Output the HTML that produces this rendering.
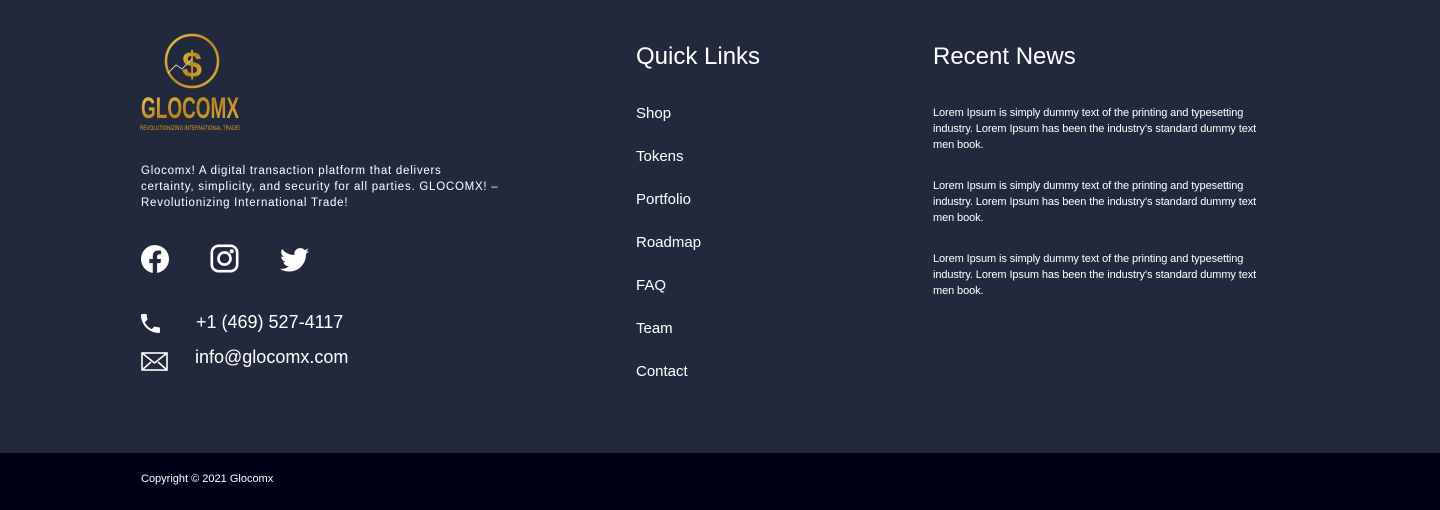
<!DOCTYPE html>
<html><head><style>
*{margin:0;padding:0;box-sizing:border-box}
body{width:1440px;height:510px;background:#23293c;font-family:"Liberation Sans",sans-serif;color:#fff;position:relative;overflow:hidden}
.a{position:absolute}
.ql{font-size:15px;color:#fff}
.news{font-size:11px;line-height:16px;width:370px;letter-spacing:-0.1px;white-space:nowrap}
</style></head><body>
<svg class="a" style="left:140px;top:33px" width="102" height="100" viewBox="0 0 102 100">
<defs><linearGradient id="g" x1="0" y1="0" x2="1" y2="1"><stop offset="0" stop-color="#f0c850"/><stop offset=".5" stop-color="#b8861e"/><stop offset="1" stop-color="#e0b040"/></linearGradient></defs>
<circle cx="52" cy="28" r="26" fill="none" stroke="url(#g)" stroke-width="2.5"/>
<text x="52" y="44" font-size="36" font-family="Liberation Sans" font-weight="bold" fill="url(#g)" text-anchor="middle">$</text>
<polyline points="28,40 36,32 42,36 52,26" fill="none" stroke="#ccc" stroke-width="1"/>
<text x="50" y="85" font-size="30" font-family="Liberation Sans" font-weight="bold" fill="url(#g)" text-anchor="middle" textLength="98" lengthAdjust="spacingAndGlyphs">GLOCOMX</text>
<text x="50" y="97" font-size="6" font-family="Liberation Sans" fill="#d4a030" text-anchor="middle" textLength="100" lengthAdjust="spacingAndGlyphs">REVOLUTIONIZING INTERNATIONAL TRADE!</text>
</svg>
<div class="a" style="left:141px;top:163px;width:420px;font-size:11.5px;line-height:16px;letter-spacing:0.75px;white-space:nowrap">Glocomx! A digital transaction platform that delivers<br>certainty, simplicity, and security for all parties. GLOCOMX! –<br>Revolutionizing International Trade!</div>
<svg class="a" style="left:141px;top:245px" width="28" height="28" viewBox="0 0 24 24"><path fill="#fff" d="M24 12a12 12 0 1 0-13.9 11.9v-8.4H7.1V12h3V9.4c0-3 1.8-4.7 4.5-4.7 1.3 0 2.7.2 2.7.2v3h-1.5c-1.5 0-2 .9-2 1.9V12h3.4l-.5 3.5h-2.9v8.4A12 12 0 0 0 24 12z"/></svg>
<svg class="a" style="left:210px;top:244px" width="29" height="29" viewBox="0 0 24 24" fill="none" stroke="#fff" stroke-width="2.2"><rect x="1.5" y="1.5" width="21" height="21" rx="5.5"/><circle cx="12" cy="12" r="5"/><circle cx="18" cy="6" r=".6" fill="#fff"/></svg>
<svg class="a" style="left:280px;top:247px" width="29" height="26" viewBox="0 0 24 20"><path fill="#fff" d="M24 2.4c-.9.4-1.8.6-2.8.8 1-.6 1.8-1.6 2.2-2.7-1 .6-2 1-3.1 1.2A4.9 4.9 0 0 0 11.9 6 14 14 0 0 1 1.7.9a4.9 4.9 0 0 0 1.5 6.6c-.8 0-1.6-.2-2.2-.6 0 2.4 1.7 4.4 3.9 4.8-.7.2-1.5.2-2.2.1.6 2 2.4 3.4 4.6 3.4A9.9 9.9 0 0 1 0 17.3 14 14 0 0 0 7.5 19.5c9.1 0 14-7.5 14-14v-.6c1-.7 1.8-1.6 2.5-2.5z"/></svg>
<svg class="a" style="left:141px;top:314px" width="20" height="20" viewBox="3 3 19 19"><path fill="#fff" d="M6.6 10.8c1.4 2.8 3.8 5.1 6.6 6.6l2.2-2.2c.3-.3.7-.4 1-.2 1.1.4 2.3.6 3.6.6.6 0 1 .4 1 1V20c0 .6-.4 1-1 1C10.6 21 3 13.4 3 4c0-.6.4-1 1-1h3.5c.6 0 1 .4 1 1 0 1.3.2 2.5.6 3.6.1.3 0 .7-.2 1z"/></svg>
<div class="a" style="left:196px;top:312px;font-size:18px">+1 (469) 527-4117</div>
<svg class="a" style="left:141px;top:352px" width="27" height="19" viewBox="0 0 27 19" fill="none" stroke="#fff" stroke-width="1.6"><rect x="1" y="1" width="25" height="17"/><path d="M1 1l12.5 10L26 1M1 18l9-8M26 18l-9-8"/></svg>
<div class="a" style="left:195px;top:347px;font-size:18px">info@glocomx.com</div>
<div class="a" style="left:636px;top:43px;font-size:24px">Quick Links</div>
<div class="a ql" style="left:636px;top:105px">Shop</div>
<div class="a ql" style="left:636px;top:148px">Tokens</div>
<div class="a ql" style="left:636px;top:191px">Portfolio</div>
<div class="a ql" style="left:636px;top:234px">Roadmap</div>
<div class="a ql" style="left:636px;top:277px">FAQ</div>
<div class="a ql" style="left:636px;top:320px">Team</div>
<div class="a ql" style="left:636px;top:363px">Contact</div>
<div class="a" style="left:933px;top:43px;font-size:24px">Recent News</div>
<div class="a news" style="left:933px;top:105px">Lorem Ipsum is simply dummy text of the printing and typesetting<br>industry. Lorem Ipsum has been the industry's standard dummy text<br>men book.</div>
<div class="a news" style="left:933px;top:178px">Lorem Ipsum is simply dummy text of the printing and typesetting<br>industry. Lorem Ipsum has been the industry's standard dummy text<br>men book.</div>
<div class="a news" style="left:933px;top:251px">Lorem Ipsum is simply dummy text of the printing and typesetting<br>industry. Lorem Ipsum has been the industry's standard dummy text<br>men book.</div>
<div class="a" style="left:0;top:453px;width:1440px;height:57px;background:#000014"></div>
<div class="a" style="left:141px;top:473px;font-size:11px;letter-spacing:0px">Copyright © 2021 Glocomx</div>
</body></html>
